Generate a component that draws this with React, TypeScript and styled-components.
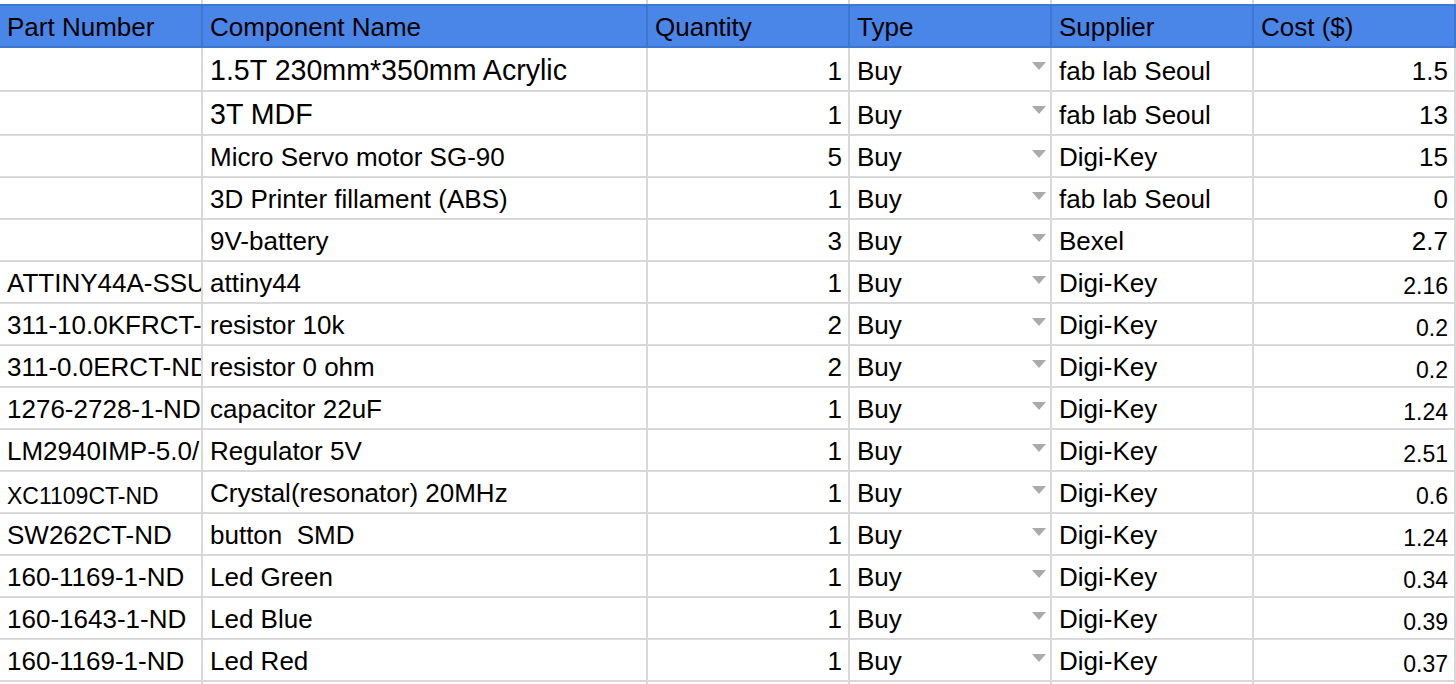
import React from "react";
import styled, { createGlobalStyle } from "styled-components";

const GlobalStyle = createGlobalStyle`
  * { box-sizing: border-box; }
  html, body { margin: 0; padding: 0; background: #ffffff; }
  body {
    width: 1456px;
    height: 684px;
    overflow: hidden;
    font-family: "Liberation Sans", Arial, sans-serif;
  }
`;

const COLS = "203px 445px 202px 202px 202px 202px";
const GRID = "#d9d9d9";
const HEAD_BG = "#4a86e8";
const HEAD_LINE = "#3f76d0";

const Sheet = styled.div`
  display: flex;
  flex-direction: column;
  width: 1456px;
  height: 684px;
  overflow: hidden;
  background: #ffffff;
`;

const Row = styled.div<{ $h: number }>`
  display: grid;
  grid-template-columns: ${COLS};
  height: ${(p) => p.$h}px;
  flex: none;
`;

const StubCell = styled.div`
  border-right: 2px solid ${GRID};
`;

const HeadCell = styled.div`
  display: flex;
  align-items: flex-end;
  padding: 0 6px 3px 7px;
  background: ${HEAD_BG};
  border-top: 2px solid ${HEAD_LINE};
  border-bottom: 2px solid ${HEAD_LINE};
  border-right: 2px solid ${HEAD_LINE};
  font-size: 26px;
  line-height: 1.15;
  color: #000;
  white-space: nowrap;
  overflow: hidden;
`;

const Cell = styled.div<{ $align?: "left" | "right"; $size?: number }>`
  display: flex;
  align-items: flex-end;
  justify-content: ${(p) => (p.$align === "right" ? "flex-end" : "flex-start")};
  padding: 0 6px 3px 7px;
  border-right: 2px solid ${GRID};
  border-bottom: 2px solid ${GRID};
  font-size: ${(p) => p.$size ?? 26}px;
  line-height: 1.15;
  color: #000;
  white-space: pre;
  overflow: hidden;
`;

const TypeCell = styled(Cell)`
  justify-content: space-between;
  padding-right: 4px;
`;

const DropArrow = styled.span`
  align-self: flex-start;
  margin-top: 14px;
  width: 0;
  height: 0;
  border-left: 7px solid transparent;
  border-right: 7px solid transparent;
  border-top: 8px solid #ababab;
  flex: none;
`;

type Item = {
  part: string;
  partSize?: number;
  name: string;
  nameSize?: number;
  qty: number;
  supplier: string;
  cost: string;
  costSize?: number;
};

const items: Item[] = [
  { part: "", name: "1.5T 230mm*350mm Acrylic", nameSize: 28.6, qty: 1, supplier: "fab lab Seoul", cost: "1.5" },
  { part: "", name: "3T MDF", nameSize: 28.6, qty: 1, supplier: "fab lab Seoul", cost: "13" },
  { part: "", name: "Micro Servo motor SG-90", qty: 5, supplier: "Digi-Key", cost: "15" },
  { part: "", name: "3D Printer fillament (ABS)", qty: 1, supplier: "fab lab Seoul", cost: "0" },
  { part: "", name: "9V-battery", qty: 3, supplier: "Bexel", cost: "2.7" },
  { part: "ATTINY44A-SSU", name: "attiny44", qty: 1, supplier: "Digi-Key", cost: "2.16", costSize: 23 },
  { part: "311-10.0KFRCT-ND", name: "resistor 10k", qty: 2, supplier: "Digi-Key", cost: "0.2", costSize: 23 },
  { part: "311-0.0ERCT-ND", name: "resistor 0 ohm", qty: 2, supplier: "Digi-Key", cost: "0.2", costSize: 23 },
  { part: "1276-2728-1-ND", name: "capacitor 22uF", qty: 1, supplier: "Digi-Key", cost: "1.24", costSize: 23 },
  { part: "LM2940IMP-5.0/NOPB", name: "Regulator 5V", qty: 1, supplier: "Digi-Key", cost: "2.51", costSize: 23 },
  { part: "XC1109CT-ND", partSize: 23, name: "Crystal(resonator) 20MHz", qty: 1, supplier: "Digi-Key", cost: "0.6", costSize: 23 },
  { part: "SW262CT-ND", name: "button  SMD", qty: 1, supplier: "Digi-Key", cost: "1.24", costSize: 23 },
  { part: "160-1169-1-ND", name: "Led Green", qty: 1, supplier: "Digi-Key", cost: "0.34", costSize: 23 },
  { part: "160-1643-1-ND", name: "Led Blue", qty: 1, supplier: "Digi-Key", cost: "0.39", costSize: 23 },
  { part: "160-1169-1-ND", name: "Led Red", qty: 1, supplier: "Digi-Key", cost: "0.37", costSize: 23 },
];

const headers = ["Part Number", "Component Name", "Quantity", "Type", "Supplier", "Cost ($)"];

function Stub() {
  return (
    <Row $h={4}>
      {headers.map((h) => (
        <StubCell key={h} />
      ))}
    </Row>
  );
}

export default function App() {
  return (
    <>
      <GlobalStyle />
      <Sheet>
        <Stub />
        <Row $h={44}>
          {headers.map((h) => (
            <HeadCell key={h}>{h}</HeadCell>
          ))}
        </Row>
        {items.map((it, i) => (
          <Row key={i} $h={it.nameSize ? 44 : 42}>
            <Cell $size={it.partSize}>{it.part}</Cell>
            <Cell $size={it.nameSize}>{it.name}</Cell>
            <Cell $align="right">{it.qty}</Cell>
            <TypeCell>
              <span>Buy</span>
              <DropArrow />
            </TypeCell>
            <Cell>{it.supplier}</Cell>
            <Cell $align="right" $size={it.costSize}>
              {it.cost}
            </Cell>
          </Row>
        ))}
        <Stub />
      </Sheet>
    </>
  );
}
